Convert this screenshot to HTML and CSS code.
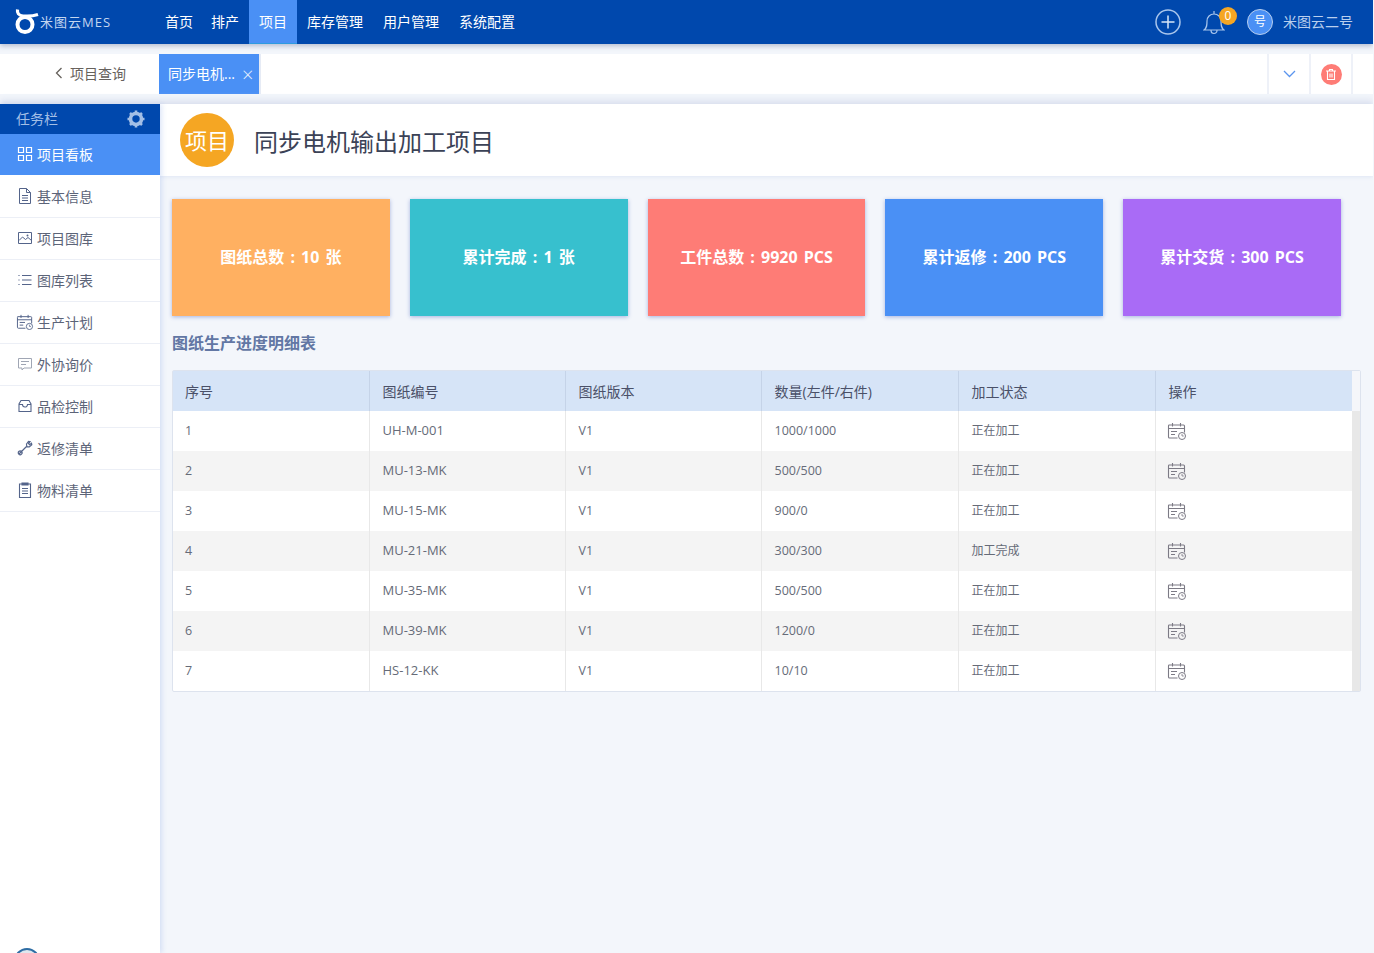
FILE: index.html
```html
<!DOCTYPE html>
<html lang="zh-CN">
<head>
    <meta charset="UTF-8">
    <meta name="viewport" content="width=device-width, initial-scale=1.0">
    <title>米图云MES</title>
    <link rel="stylesheet" href="styles.css">
</head>
<body>
    <svg class="defs" width="0" height="0">
        <symbol id="plan" viewBox="0 0 20 18">
            <path d="M1.500 3h15a1 1 0 0 1 1 1v6.500M10.500 16H2.500a1 1 0 0 1-1-1V4a1 1 0 0 1 .5-1M1.500 6.500h16M5.500 1v3.500M13.500 1v3.500M4 9.500h6M4 12.500h4" fill="none" stroke="currentColor" stroke-width="1.100"/>
            <circle cx="15" cy="14" r="3.500" fill="none" stroke="currentColor"/>
            <path d="M15 12v2h1.800" fill="none" stroke="currentColor" stroke-width=".8"/>
        </symbol>
    </svg>

    <!-- Navigation Bar -->
    <header class="topbar">
        <div class="logo">
            <svg width="25" height="26" viewBox="0 0 25 26"><path d="M3.500 .5C3 4 4.500 6.500 9 7c5 .5 9 .5 15-1.500" fill="none" stroke="#fff" stroke-width="3.200"/><circle cx="11" cy="15.500" r="7.500" fill="none" stroke="#fff" stroke-width="4"/></svg>
            <span>米图云MES</span>
        </div>
        <nav class="main-nav">
            <a href="#">首页</a>
            <a href="#">排产</a>
            <a href="#" class="active">项目</a>
            <a href="#">库存管理</a>
            <a href="#">用户管理</a>
            <a href="#">系统配置</a>
        </nav>
        <div class="user-area">
            <svg class="plus" width="26" height="26" viewBox="0 0 26 26"><circle cx="13" cy="13" r="12" fill="none" stroke="#a9c6ec" stroke-width="1.500"/><path d="M13 6.500v13M6.500 13h13" stroke="#d7e6f8" stroke-width="1.500"/></svg>
            <div class="bell">
                <svg width="22" height="26" viewBox="0 0 22 26"><path d="M1 21c3-2 3-5 3-9 0-4 3-7 7-7s7 3 7 7c0 4 0 7 3 9zM8 21.500a3 3 0 0 0 6 0M11 2v3" fill="none" stroke="#a9c6ec" stroke-width="1.200"/></svg>
                <span class="badge">0</span>
            </div>
            <span class="avatar">号</span>
            <span class="user-name">米图云二号</span>
        </div>
    </header>

    <div class="tabbar">
        <a href="#" class="back">
            <svg width="8" height="12" viewBox="0 0 8 12"><path d="M6.500 1 1.500 6l5 5" fill="none" stroke="#66615c" stroke-width="1.300"/></svg>
            项目查询
        </a>
        <div class="tab">同步电机...<span class="tab-close">×</span></div>
        <div class="tab-spacer"></div>
        <div class="tab-tool">
            <svg width="13" height="8" viewBox="0 0 13 8"><path d="M1 1l5.500 5.500L12 1" fill="none" stroke="#5b95ee" stroke-width="1.300"/></svg>
        </div>
        <div class="tab-tool">
            <span class="trash">
                <svg width="12" height="13" viewBox="0 0 12 13"><path d="M1 3h10M4.500 3V1.500h3V3M2.500 3.500v8h7v-8M5 5.500v4M7 5.500v4" fill="none" stroke="#fff" stroke-width="1.100"/></svg>
            </span>
        </div>
    </div>

    <div class="layout">
        <aside class="sidebar">
            <div class="side-head">
                <span>任务栏</span>
                <svg width="18" height="18" viewBox="0 0 18 18"><path d="M9 3.500a5.500 5.500 0 1 0 0 11 5.500 5.500 0 0 0 0-11z" fill="none" stroke="#a3bfe6" stroke-width="3.600"/><path d="M9 .5v3M9 14.500v3M.5 9h3M14.500 9h3M3 3l2.200 2.200M12.800 12.800 15 15M3 15l2.200-2.200M12.800 5.200 15 3" stroke="#a3bfe6" stroke-width="2.600"/></svg>
            </div>
            <a href="#" class="side-item active">
                <svg width="16" height="16" viewBox="0 0 16 16"><path d="M1.500 1.500h5v5h-5zM9.500 1.500h5v5h-5zM1.500 9.500h5v5h-5zM9.500 9.500h5v5h-5z" fill="none" stroke="#fff" stroke-width="1.200"/></svg>
                项目看板
            </a>
            <a href="#" class="side-item">
                <svg width="16" height="16" viewBox="0 0 16 16"><path d="M2.500.5h7l4 4v11h-11zM9.500.5v4h4M5 7.500h6M5 10h6M5 12.500h6" fill="none" stroke="currentColor"/></svg>
                基本信息
            </a>
            <a href="#" class="side-item">
                <svg width="16" height="16" viewBox="0 0 16 16"><path d="M1.500 2.500h13v11h-13zM2 10.500l3.500-3.500 3 2.500 2.500-2 3.500 3" fill="none" stroke="currentColor"/><circle cx="10.500" cy="5.500" r="1" fill="currentColor"/></svg>
                项目图库
            </a>
            <a href="#" class="side-item">
                <svg width="16" height="16" viewBox="0 0 16 16"><path d="M5 3.500h9.500M5 8h9.500M5 12.500h9.500M2 3v1M2 7.500v1M2 12v1" fill="none" stroke="currentColor" stroke-width="1.100"/></svg>
                图库列表
            </a>
            <a href="#" class="side-item">
                <svg class="wide-icon" width="18" height="16" viewBox="0 0 20 18"><use href="#plan"/></svg>
                生产计划
            </a>
            <a href="#" class="side-item">
                <svg width="16" height="16" viewBox="0 0 16 16"><path d="M1.500 2.500h13v9.500H7l-2 2v-2H1.500zM4 5.500h8M4 8.500h5" fill="none" stroke="#a0a6b4"/></svg>
                外协询价
            </a>
            <a href="#" class="side-item">
                <svg width="16" height="16" viewBox="0 0 16 16"><path d="M2 13.500V6l2-3.500h8L14 6v7.500zM2 6.500h3.500a2.500 2.500 0 0 0 5 0H14" fill="none" stroke="currentColor" stroke-width="1.100"/></svg>
                品检控制
            </a>
            <a href="#" class="side-item">
                <svg width="16" height="16" viewBox="0 0 16 16"><path d="M2 14l7-7M4.500 14.200a1.800 1.800 0 1 1-2.700-2.700 1.800 1.800 0 1 1 2.700 2.700zM9 7l1.200-1.200M9.500 4l2-2.500 1.500.2-1.500 1.800 1 1.200 2-1.500.3 1.500-2.500 2.200-2.500-.3z" fill="none" stroke="currentColor" stroke-width="1.200"/></svg>
                返修清单
            </a>
            <a href="#" class="side-item">
                <svg width="16" height="16" viewBox="0 0 16 16"><path d="M2.500 2h11v13.500h-11zM5 1h6v2H5zM5 6.500h6M5 9h6M5 11.500h6" fill="none" stroke="currentColor" stroke-width="1.100"/></svg>
                物料清单
            </a>
            <span class="side-foot"></span>
        </aside>

        <main class="content">
            <div class="title-bar">
                <span class="title-mark">项目</span>
                <h1>同步电机输出加工项目</h1>
            </div>

            <div class="body-wrap">
                <div class="stat-row">
                    <div class="stat orange">图纸总数 : 10 张</div>
                    <div class="stat teal">累计完成 : 1 张</div>
                    <div class="stat red">工件总数 : 9920 PCS</div>
                    <div class="stat blue">累计返修 : 200 PCS</div>
                    <div class="stat purple">累计交货 : 300 PCS</div>
                </div>

                <h2 class="section-title">图纸生产进度明细表</h2>

                <div class="table-box">
                    <table class="detail-table">
                        <thead>
                            <tr><th>序号</th><th>图纸编号</th><th>图纸版本</th><th>数量(左件/右件)</th><th>加工状态</th><th>操作</th></tr>
                        </thead>
                        <tbody>
                            <tr><td>1</td><td class="code">UH-M-001</td><td>V1</td><td>1000/1000</td><td class="state">正在加工</td><td><svg class="op" width="20" height="18"><use href="#plan"/></svg></td></tr>
                            <tr><td>2</td><td class="code">MU-13-MK</td><td>V1</td><td>500/500</td><td class="state">正在加工</td><td><svg class="op" width="20" height="18"><use href="#plan"/></svg></td></tr>
                            <tr><td>3</td><td class="code">MU-15-MK</td><td>V1</td><td>900/0</td><td class="state">正在加工</td><td><svg class="op" width="20" height="18"><use href="#plan"/></svg></td></tr>
                            <tr><td>4</td><td class="code">MU-21-MK</td><td>V1</td><td>300/300</td><td class="state">加工完成</td><td><svg class="op" width="20" height="18"><use href="#plan"/></svg></td></tr>
                            <tr><td>5</td><td class="code">MU-35-MK</td><td>V1</td><td>500/500</td><td class="state">正在加工</td><td><svg class="op" width="20" height="18"><use href="#plan"/></svg></td></tr>
                            <tr><td>6</td><td class="code">MU-39-MK</td><td>V1</td><td>1200/0</td><td class="state">正在加工</td><td><svg class="op" width="20" height="18"><use href="#plan"/></svg></td></tr>
                            <tr><td>7</td><td class="code">HS-12-KK</td><td>V1</td><td>10/10</td><td class="state">正在加工</td><td><svg class="op" width="20" height="18"><use href="#plan"/></svg></td></tr>
                        </tbody>
                    </table>
                    <div class="scroll-track"><div class="scroll-corner"></div></div>
                </div>
            </div>
        </main>
    </div>
</body>
</html>
```

FILE: styles.css
```css
* {
    box-sizing: border-box;
}

html, body {
    height: 953px;
    overflow: hidden;
}

body {
    margin: 0;
    width: 1373px;
    font-family: "Open Sans", "Noto Sans CJK SC", sans-serif;
    font-size: 14px;
    color: #5c6478;
    background-color: #f3f6fb;
}

a {
    text-decoration: none;
    color: inherit;
}

.defs {
    position: absolute;
}

/* top bar */
.topbar {
    height: 44px;
    display: flex;
    align-items: center;
    background: #0048ad;
    box-shadow: 0 2px 5px rgba(60, 80, 130, 0.35);
    position: relative;
}

.logo {
    width: 165px;
    padding-left: 14px;
    display: flex;
    align-items: center;
    color: #c3d6f0;
    font-size: 13px;
    letter-spacing: 1px;
}

.logo svg {
    margin-right: 1px;
}

.logo span {
    padding-bottom: 2px;
}

.main-nav {
    display: flex;
    height: 44px;
}

.main-nav a {
    color: #fff;
    line-height: 44px;
    margin-right: 20px;
    font-size: 14px;
}

.main-nav a:first-child {
    margin-right: 18px;
}

.main-nav a:nth-child(2) {
    margin-right: 10px;
}

.main-nav a.active {
    width: 48px;
    margin-right: 10px;
    text-align: center;
    background: #4a90f5;
    border-bottom: 1px solid #2d9be0;
}

.user-area {
    margin-left: auto;
    display: flex;
    align-items: center;
    padding-right: 20px;
    color: #b9cfee;
}

.plus {
    margin-right: 22px;
}

.bell {
    position: relative;
    width: 22px;
    height: 26px;
    margin-right: 22px;
}

.badge {
    position: absolute;
    left: 16px;
    top: -2px;
    width: 18px;
    height: 18px;
    border-radius: 50%;
    background: #f5a623;
    color: #fff;
    font-size: 12px;
    line-height: 18px;
    text-align: center;
}

.avatar {
    width: 26px;
    height: 26px;
    margin-right: 10px;
    border-radius: 50%;
    border: 1.500px solid #b9cfee;
    background: #4a90f5;
    color: #fff;
    font-size: 12px;
    line-height: 23px;
    text-align: center;
}

.user-name {
    padding-bottom: 2px;
}

/* tab bar */
.tabbar {
    height: 40px;
    margin-top: 10px;
    padding-right: 20px;
    display: flex;
    background: #fff;
}

.back {
    width: 159px;
    display: flex;
    align-items: center;
    justify-content: flex-start;
    padding: 0 0 2px 55px;
    gap: 7px;
    color: #66615c;
}

.tab {
    width: 102px;
    display: flex;
    align-items: center;
    padding: 0 0 2px 9px;
    background: #4a90f5;
    color: #fff;
    border-right: 2px solid #e6ebf5;
}

.tab-close {
    margin: 3px 0 0 7px;
    font-size: 20px;
    font-weight: 300;
    line-height: 20px;
    color: #e8f0fd;
}

.tab-spacer {
    flex: 1;
}

.tab-tool {
    width: 42px;
    display: flex;
    align-items: center;
    justify-content: center;
    border-left: 2px solid #eef1f8;
}

.tab-tool:last-child {
    border-right: 2px solid #eef1f8;
    width: 44px;
}

.trash {
    width: 21px;
    height: 21px;
    border-radius: 50%;
    background: #fe7c76;
    display: flex;
    align-items: center;
    justify-content: center;
}

/* layout */
.layout {
    margin-top: 10px;
    height: 849px;
    display: flex;
    position: relative;
    box-shadow: 0 -5px 6px #e1e6f2;
}

.sidebar {
    width: 160px;
    flex-shrink: 0;
    background: #fff;
    position: relative;
    overflow: hidden;
    box-shadow: 2px 0 5px rgba(90, 130, 220, 0.2);
    z-index: 1;
}

.side-head {
    height: 30px;
    padding: 0 15px 0 16px;
    display: flex;
    align-items: center;
    justify-content: space-between;
    background: #0048ad;
    color: #a3bfe6;
}

.side-head span {
    padding-bottom: 2px;
}

.side-item {
    height: 42px;
    padding: 0 0 2px 17px;
    display: flex;
    align-items: center;
    gap: 4px;
    color: #5c6478;
    border-bottom: 1px solid #eceff6;
}

.side-item svg {
    color: #54648a;
}

.side-item .wide-icon {
    margin: 0 -1px 0 -1px;
    width: 18px;
}

.side-item.active {
    height: 41px;
    margin-bottom: 1px;
    background: #4a90f5;
    color: #fff;
    border-bottom: 0;
}

.side-foot {
    position: absolute;
    left: 14px;
    top: 844px;
    width: 26px;
    height: 26px;
    border-radius: 50%;
    border: 2px solid #2e6da4;
    background: #dfe7ee;
}

/* content */
.content {
    flex: 1;
    min-width: 0;
}

.title-bar {
    height: 72px;
    padding-left: 20px;
    display: flex;
    align-items: center;
    background: #fff;
    box-shadow: 0 1px 4px rgba(90, 120, 200, 0.12);
}

.title-mark {
    width: 54px;
    height: 54px;
    border-radius: 50%;
    background: #f5a623;
    color: #fff;
    font-size: 22px;
    line-height: 54px;
    text-align: center;
}

.title-bar h1 {
    margin: 0 0 0 20px;
    font-size: 24px;
    font-weight: 400;
    color: #3b4256;
}

.body-wrap {
    padding: 23px 12px 0;
}

.stat-row {
    width: 1169px;
    display: grid;
    grid-template-columns: repeat(5, 1fr);
    gap: 20px;
}

.stat {
    height: 117px;
    padding-bottom: 4px;
    display: flex;
    align-items: center;
    justify-content: center;
    color: #fff;
    font-size: 16px;
    font-weight: 700;
    word-spacing: 2px;
    box-shadow: 0 1px 4px rgba(70, 100, 190, 0.45);
}

.orange { background: #ffb061; }
.teal { background: #37c0ce; }
.red { background: #fe7c76; }
.blue { background: #4a90f5; }
.purple { background: #a96bf6; }

.section-title {
    margin: 16px 0 15px;
    font-size: 16px;
    line-height: 23px;
    font-weight: 700;
    color: #6277a4;
}

.table-box {
    width: 1189px;
    display: flex;
    border: 1px solid #dde3ee;
    border-radius: 2px;
    background: #fff;
}

.detail-table {
    width: 1179px;
    table-layout: fixed;
    border-collapse: collapse;
}

.detail-table th {
    width: 196px;
    height: 40px;
    padding: 0 12px 0 13px;
    text-align: left;
    font-weight: 400;
    font-size: 14px;
    color: #4a5068;
    background: #d6e4f7;
    border-left: 1px solid #c5d3e8;
}

.detail-table th:nth-child(n+4) {
    width: 197px;
}

.detail-table td {
    height: 40px;
    padding: 0 12px 2px 13px;
    font-size: 12.500px;
    color: #666b78;
    border-left: 1px solid #e8e8e8;
}

.detail-table td.code {
    font-size: 13px;
}

.detail-table td.state {
    font-size: 12px;
}

.detail-table th:first-child,
.detail-table td:first-child {
    padding-left: 12px;
    border-left: 0;
}

.detail-table tbody tr:nth-child(even) td {
    background: #f4f4f4;
}

.op {
    display: block;
    margin: 2px 0 0 -2px;
    color: #7c7a85;
}

.scroll-track {
    flex: 1;
    background: #e8e8e8;
}

.scroll-corner {
    height: 40px;
    background: #f5f6fa;
}
```
